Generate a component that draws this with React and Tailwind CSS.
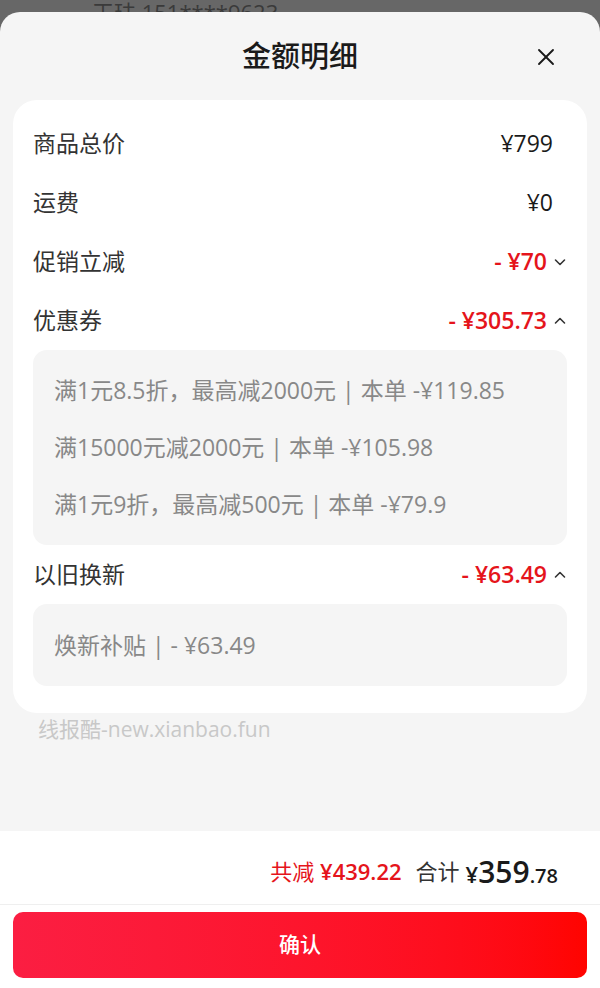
import { X } from 'lucide-react';

const font = { fontFamily: '"Open Sans", "Noto Sans CJK SC", "Noto Sans", sans-serif' };

function Chevron({ up }) {
  return (
    <svg width="14" height="14" viewBox="0 0 14 14" className="ml-[6px]">
      <polyline
        points={up ? '2.5,9 7,4.5 11.5,9' : '2.5,5 7,9.5 11.5,5'}
        fill="none"
        stroke="#333"
        strokeWidth="1.6"
        strokeLinecap="round"
        strokeLinejoin="round"
      />
    </svg>
  );
}

function Row({ label, value, chevron }) {
  return (
    <div className="flex h-[59px] items-center justify-between">
      <span className="text-[23px] text-[#333]">{label}</span>
      {chevron ? (
        <span className="flex items-center">
          <span className="text-[23px] font-semibold text-[#e5141b]">{value}</span>
          <Chevron up={chevron === 'up'} />
        </span>
      ) : (
        <span className="pr-[14px] text-[23px] text-[#1a1a1a]">{value}</span>
      )}
    </div>
  );
}

const coupons = [
  '满1元8.5折，最高减2000元 | 本单 -¥119.85',
  '满15000元减2000元 | 本单 -¥105.98',
  '满1元9折，最高减500元 | 本单 -¥79.9',
];

export default function App() {
  return (
    <div className="flex h-[988px] flex-col bg-[#676767]" style={font}>
      {/* page behind the sheet */}
      <div className="h-[12px] overflow-hidden pl-[92px]">
        <div className="mt-[1px] text-[22px] leading-[22px] text-[#3a3a3a]">王珐 151****9623</div>
      </div>

      <div className="flex flex-1 flex-col rounded-t-[20px] bg-[#f5f5f5]">
        <div className="relative flex h-[88px] items-center justify-center">
          <span className="text-[29px] font-medium text-[#1a1a1a]">金额明细</span>
          <X className="absolute right-[40px] top-[31px] h-[28px] w-[28px] text-[#1a1a1a]" strokeWidth={1.6} />
        </div>

        <div className="mx-[13px] rounded-[24px] bg-white px-[20px] pb-[27px] pt-[14px]">
          <Row label="商品总价" value="¥799" />
          <Row label="运费" value="¥0" />
          <Row label="促销立减" value="- ¥70" chevron="down" />
          <Row label="优惠券" value="- ¥305.73" chevron="up" />
          <div className="rounded-[14px] bg-[#f5f5f5] px-[21px] py-[12px]">
            {coupons.map((c) => (
              <div key={c} className="flex h-[57px] items-center text-[23px] text-[#888]">
                {c}
              </div>
            ))}
          </div>
          <Row label="以旧换新" value="- ¥63.49" chevron="up" />
          <div className="flex h-[82px] items-center rounded-[14px] bg-[#f5f5f5] px-[21px] text-[23px] text-[#888]">
            焕新补贴 | - ¥63.49
          </div>
        </div>

        <div className="flex-1 px-[38px] pt-[1px] text-[21px] text-[#c8c8c8]">线报酷-new.xianbao.fun</div>

        <div className="bg-white">
          <div className="flex h-[74px] items-center justify-end border-b border-[#efefef] pr-[42px] pt-[8px]">
            <span className="text-[22px] text-[#e5141b]">
              共减 <span className="font-semibold">¥439.22</span>
            </span>
            <span className="ml-[14px] text-[22px] text-[#333]">合计</span>
            <span className="ml-[6px] flex items-baseline text-[#1a1a1a]">
              <span className="text-[22px] font-semibold">¥</span>
              <span className="text-[30px] font-semibold">359</span>
              <span className="text-[20px] font-semibold">.78</span>
            </span>
          </div>
          <div className="px-[13px] pb-[10px] pt-[7px]">
            <button className="flex h-[66px] w-full items-center justify-center rounded-[10px] bg-gradient-to-r from-[#fb1e42] to-[#ff0400] text-[21px] font-medium text-white">
              确认
            </button>
          </div>
        </div>
      </div>
    </div>
  );
}
